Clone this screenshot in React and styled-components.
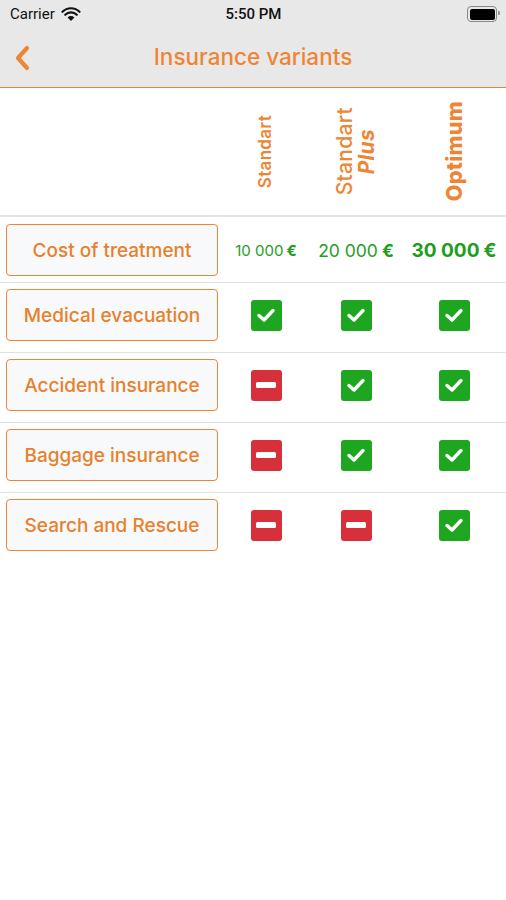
import React from "react";
import styled, { createGlobalStyle } from "styled-components";

const GlobalStyle = createGlobalStyle`
  html, body {
    margin: 0;
    padding: 0;
    background: #ffffff;
  }
  body {
    font-family: Inter, Roboto, "Liberation Sans", sans-serif;
  }
`;

const ORANGE = "#ee8535";
const GREEN = "#1e9d1e";

const plans = [
  { name: "Standart", size: 17, weight: 600 },
  { name: "Standart", extra: "Plus", size: 21, weight: 500 },
  { name: "Optimum", size: 21.5, weight: 800 },
];

const prices = [
  { value: "10 000", size: 15, weight: 400 },
  { value: "20 000", size: 17.5, weight: 400 },
  { value: "30 000", size: 19, weight: 700 },
];

const rows = [
  { label: "Medical evacuation", values: [true, true, true] },
  { label: "Accident insurance", values: [false, true, true] },
  { label: "Baggage insurance", values: [false, true, true] },
  { label: "Search and Rescue", values: [false, false, true] },
];

export default function App() {
  return (
    <>
      <GlobalStyle />
      <Screen>
        <TopArea>
          <StatusBar>
            <Carrier>
              Carrier
              <WifiIcon />
            </Carrier>
            <Time>5:50 PM</Time>
            <Battery>
              <BatteryFill />
            </Battery>
          </StatusBar>
          <NavBar>
            <BackButton>
              <svg width="18" height="26" viewBox="0 0 18 26">
                <path
                  d="M14 3 L5 13 L14 23"
                  fill="none"
                  stroke={ORANGE}
                  strokeWidth="4.2"
                  strokeLinecap="round"
                  strokeLinejoin="round"
                />
              </svg>
            </BackButton>
            <Title>Insurance variants</Title>
          </NavBar>
        </TopArea>

        <HeaderRow>
          <span />
          {plans.map((p, i) => (
            <PlanCell key={i}>
              <Vertical $size={p.size} $weight={p.weight}>
                <span>{p.name}</span>
                {p.extra && <PlanExtra>{p.extra}</PlanExtra>}
              </Vertical>
            </PlanCell>
          ))}
        </HeaderRow>

        <CostRow>
          <LabelCell>
            <LabelButton>Cost of treatment</LabelButton>
          </LabelCell>
          {prices.map((p, i) => (
            <Price key={i} $size={p.size} $weight={p.weight}>
              {p.value}
              <Euro $size={p.size}>€</Euro>
            </Price>
          ))}
        </CostRow>

        {rows.map((row, i) => (
          <Row key={row.label} $last={i === rows.length - 1}>
            <LabelCell>
              <LabelButton>{row.label}</LabelButton>
            </LabelCell>
            {row.values.map((v, j) => (
              <IconCell key={j}>{v ? <CheckBox /> : <MinusBox />}</IconCell>
            ))}
          </Row>
        ))}
      </Screen>
    </>
  );
}

function WifiIcon() {
  return (
    <svg width="20" height="15" viewBox="0 0 20 15" style={{ marginLeft: 6 }}>
      <path d="M10 14 L6.6 10.4 A4.8 4.8 0 0 1 13.4 10.4 Z" fill="#111" />
      <path
        d="M4.2 7.8 A8.2 8.2 0 0 1 15.8 7.8"
        fill="none"
        stroke="#111"
        strokeWidth="2.2"
        strokeLinecap="round"
      />
      <path
        d="M1.5 4.8 A12 12 0 0 1 18.5 4.8"
        fill="none"
        stroke="#111"
        strokeWidth="2.2"
        strokeLinecap="round"
      />
    </svg>
  );
}

function CheckBox() {
  return (
    <Box $color="#1fa620">
      <svg width="20" height="16" viewBox="0 0 20 16">
        <path
          d="M3 8.5 L8 13 L17 3.5"
          fill="none"
          stroke="#fff"
          strokeWidth="3.4"
          strokeLinecap="round"
          strokeLinejoin="round"
        />
      </svg>
    </Box>
  );
}

function MinusBox() {
  return (
    <Box $color="#d8303a">
      <MinusBar />
    </Box>
  );
}

const Screen = styled.div`
  width: 506px;
  min-height: 900px;
  background: #fff;
`;

const TopArea = styled.header`
  background: #e8e8e8;
  border-bottom: 1px solid ${ORANGE};
`;

const StatusBar = styled.div`
  height: 28px;
  display: grid;
  grid-template-columns: 1fr auto 1fr;
  align-items: center;
  padding: 0 9px 0 10px;
  font-family: Roboto, "Liberation Sans", sans-serif;
  font-size: 15px;
  color: #111;
`;

const Carrier = styled.div`
  display: flex;
  align-items: center;
`;

const Time = styled.div`
  font-weight: 500;
`;

const Battery = styled.div`
  justify-self: end;
  width: 25px;
  height: 11px;
  border: 1.5px solid #888;
  border-radius: 4px;
  padding: 1.5px;
  position: relative;

  &::after {
    content: "";
    position: absolute;
    right: -4px;
    top: 4px;
    width: 2px;
    height: 4px;
    background: #999;
    border-radius: 0 1px 1px 0;
  }
`;

const BatteryFill = styled.div`
  width: 100%;
  height: 100%;
  background: #000;
  border-radius: 2px;
`;

const NavBar = styled.div`
  height: 59px;
  display: grid;
  grid-template-columns: 60px 1fr 60px;
  align-items: center;
`;

const BackButton = styled.div`
  padding-left: 13px;
  display: flex;
  align-items: center;
`;

const Title = styled.div`
  text-align: center;
  font-size: 22.5px;
  font-weight: 500;
  color: ${ORANGE};
  padding-bottom: 2px;
`;

const Grid = styled.div`
  display: grid;
  grid-template-columns: 222px 88px 92px 104px;
`;

const HeaderRow = styled(Grid)`
  height: 127px;
  border-bottom: 2px solid #e1e4e7;
`;

const PlanCell = styled.div`
  display: flex;
  align-items: center;
  justify-content: center;
`;

const Vertical = styled.div`
  writing-mode: vertical-rl;
  transform: rotate(180deg);
  display: flex;
  flex-direction: column;
  align-items: center;
  font-size: ${(p) => p.$size}px;
  font-weight: ${(p) => p.$weight};
  line-height: 1.05;
  letter-spacing: 0.3px;
  color: ${ORANGE};
`;

const PlanExtra = styled.span`
  font-style: italic;
  font-weight: 700;
`;

const LabelCell = styled.div`
  padding-left: 6px;
`;

const LabelButton = styled.div`
  width: 212px;
  height: 52px;
  box-sizing: border-box;
  border: 1px solid ${ORANGE};
  border-radius: 4px;
  background: #f8f9fa;
  display: flex;
  align-items: center;
  justify-content: center;
  font-size: 19px;
  font-weight: 500;
  color: #e8802c;
`;

const CostRow = styled(Grid)`
  align-items: center;
  padding: 7px 0 6px;
  border-bottom: 1px solid #dee1e4;
`;

const Price = styled.div`
  text-align: center;
  font-size: ${(p) => p.$size}px;
  font-weight: ${(p) => p.$weight};
  color: ${GREEN};
  white-space: nowrap;
`;

const Euro = styled.span`
  font-weight: 700;
  margin-left: ${(p) => Math.round(p.$size * 0.2)}px;
`;

const Row = styled(Grid)`
  align-items: center;
  padding: 6px 0 11px;
  border-bottom: ${(p) => (p.$last ? "none" : "1px solid #dee1e4")};
`;

const IconCell = styled.div`
  display: flex;
  justify-content: center;
`;

const Box = styled.div`
  width: 31px;
  height: 31px;
  border-radius: 3px;
  background: ${(p) => p.$color};
  display: flex;
  align-items: center;
  justify-content: center;
`;

const MinusBar = styled.div`
  width: 20px;
  height: 6px;
  border-radius: 1.5px;
  background: #fff;
`;
